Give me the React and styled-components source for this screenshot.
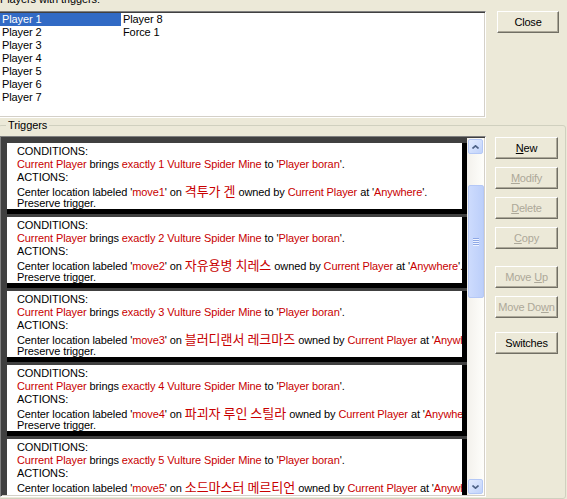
import React from "react";
import styled, { createGlobalStyle } from "styled-components";

const GlobalStyle = createGlobalStyle`
  html, body {
    margin: 0;
    padding: 0;
    height: 499px;
    overflow: hidden;
    background: #ece9d8;
  }
  body {
    font-family: "Liberation Sans", Arial, sans-serif;
    font-size: 11px;
    letter-spacing: -0.1px;
    color: #000;
  }
`;

const Page = styled.div`
  display: flex;
  flex-direction: column;
  width: 567px;
  height: 499px;
  overflow: hidden;
`;

const TopRow = styled.div`
  display: flex;
  margin-left: -2px;
  gap: 11px;
`;

const TopLeft = styled.div`
  display: flex;
  flex-direction: column;
  width: 488px;
`;

const Caption = styled.div`
  line-height: 13px;
  height: 13px;
  margin-top: -7px;
  padding-left: 2px;
`;

const PlayerList = styled.div`
  box-sizing: border-box;
  margin-top: 5px;
  height: 107px;
  padding: 1px;
  background: #fff;
  border: 1px solid;
  border-color: #808080 #fff #fff #808080;
  box-shadow: inset 1px 1px 0 #404040, inset -1px -1px 0 #d4d0c8;
  display: grid;
  grid-auto-flow: column;
  grid-template-rows: repeat(7, 13px);
  grid-template-columns: 121px;
  grid-auto-columns: 121px;
`;

const PlayerItem = styled.div`
  line-height: 13px;
  padding-left: 2px;
  white-space: nowrap;
  background: ${(p) => (p.$selected ? "#316ac5" : "transparent")};
  color: ${(p) => (p.$selected ? "#fff" : "#000")};
`;

const Button = styled.button`
  box-sizing: border-box;
  width: ${(p) => p.$width || 63}px;
  height: 22px;
  margin: ${(p) => p.$top || 0}px 0 0 0;
  padding: 0;
  font-family: "Liberation Sans", Arial, sans-serif;
  font-size: 11px;
  letter-spacing: -0.2px;
  white-space: nowrap;
  color: ${(p) => (p.disabled ? "#aca899" : "#000")};
  background: #ece9d8;
  border: 1px solid;
  border-color: #fff #716f64 #716f64 #fff;
  box-shadow: inset -1px -1px 0 #aca899;
  cursor: default;
  u {
    text-decoration: underline;
  }
`;

const GroupBox = styled.fieldset`
  box-sizing: border-box;
  width: 568px;
  margin: 1px 0 0 -2px;
  padding: 4px 0 0 1px;
  min-width: 0;
  border: 1px solid #d0d0bf;
  border-radius: 3px;
  height: 420px;
`;

const Legend = styled.legend`
  margin-left: 6px;
  padding: 0 2px;
  line-height: 13px;
  font-size: 11px;
`;

const GroupRow = styled.div`
  display: flex;
  gap: 9px;
`;

const TriggerList = styled.div`
  box-sizing: border-box;
  width: 486px;
  height: 361px;
  padding: 1px;
  border: 1px solid;
  border-color: #808080 #fff #fff #808080;
  box-shadow: inset 1px 1px 0 #404040, inset -1px -1px 0 #d4d0c8;
  display: flex;
  background: #404040;
`;

const Entries = styled.div`
  flex: 1;
  overflow: hidden;
  padding: 5px 0 0 5px;
`;

const Entry = styled.div`
  box-sizing: border-box;
  height: 71px;
  margin-bottom: 3px;
  padding: 2px 0 0 10px;
  background: #fff;
  border-right: 5px solid #000;
  border-bottom: 5px solid #000;
  overflow: hidden;
  white-space: nowrap;
`;

const Line = styled.div`
  height: 13px;
  line-height: 13px;
`;

const Red = styled.span`
  color: #c80000;
`;

const Hangul = styled.span`
  color: #c80000;
  font-family: "Noto Sans CJK KR", sans-serif;
  font-size: 13px;
  letter-spacing: 0;
  line-height: 13px;
`;

const ScrollBar = styled.div`
  width: 17px;
  display: flex;
  flex-direction: column;
  background: linear-gradient(to right, #f3f1ec, #fefefb);
`;

const ScrollButton = styled.div`
  box-sizing: border-box;
  height: 15px;
  margin: ${(p) => (p.$down ? "auto 1px 1px 1px" : "1px 1px 0 1px")};
  border: 1px solid #b4c8f6;
  border-radius: 2px;
  background: linear-gradient(135deg, #e4ecfe, #c1d3fb);
  display: flex;
  align-items: center;
  justify-content: center;
`;

const Thumb = styled.div`
  box-sizing: border-box;
  height: 113px;
  margin: 31px 0 0 1px;
  border: 1px solid #b5c8f6;
  border-radius: 2px;
  background: linear-gradient(to right, #cddbfd, #bccffa);
  display: flex;
  flex-direction: column;
  align-items: center;
  justify-content: center;
  gap: 1px;
`;

const Grip = styled.div`
  width: 6px;
  height: 1px;
  background: #8ea8e6;
  box-shadow: 0 1px 0 #eef3ff;
`;

const ButtonColumn = styled.div`
  display: flex;
  flex-direction: column;
`;

const Chevron = ({ down }) => (
  <svg width="7" height="4" viewBox="0 0 7 4">
    <path
      d={down ? "M0.5 0.5 L3.5 3.2 L6.5 0.5" : "M0.5 3.5 L3.5 0.8 L6.5 3.5"}
      fill="none"
      stroke="#4d6185"
      strokeWidth="1.6"
    />
  </svg>
);

const players = [
  "Player 1",
  "Player 2",
  "Player 3",
  "Player 4",
  "Player 5",
  "Player 6",
  "Player 7",
  "Player 8",
  "Force 1",
];

const triggers = [
  { n: 1, unit: "격투가 겐" },
  { n: 2, unit: "자유용병 치레스" },
  { n: 3, unit: "블러디랜서 레크마즈" },
  { n: 4, unit: "파괴자 루인 스틸라" },
  { n: 5, unit: "소드마스터 메르티언" },
];

const TriggerEntry = ({ n, unit }) => (
  <Entry>
    <Line>CONDITIONS:</Line>
    <Line>
      <Red>Current Player</Red> brings <Red>exactly {n} Vulture Spider Mine</Red> to '
      <Red>Player boran</Red>'.
    </Line>
    <Line>ACTIONS:</Line>
    <Line>
      Center location labeled '<Red>move{n}</Red>' on <Hangul>{unit}</Hangul> owned by{" "}
      <Red>Current Player</Red> at '<Red>Anywhere</Red>'.
    </Line>
    <Line>Preserve trigger.</Line>
  </Entry>
);

const App = () => {
  return (
    <Page>
      <GlobalStyle />
      <TopRow>
        <TopLeft>
          <Caption>Players with triggers:</Caption>
          <PlayerList>
            {players.map((p, i) => (
              <PlayerItem key={p} $selected={i === 0}>
                {p}
              </PlayerItem>
            ))}
          </PlayerList>
        </TopLeft>
        <Button $top={11} $width={62}>
          Close
        </Button>
      </TopRow>

      <GroupBox>
        <Legend>Triggers</Legend>
        <GroupRow>
          <TriggerList>
            <Entries>
              {triggers.map((t) => (
                <TriggerEntry key={t.n} n={t.n} unit={t.unit} />
              ))}
            </Entries>
            <ScrollBar>
              <ScrollButton>
                <Chevron />
              </ScrollButton>
              <Thumb>
                <Grip />
                <Grip />
                <Grip />
                <Grip />
              </Thumb>
              <ScrollButton $down>
                <Chevron down />
              </ScrollButton>
            </ScrollBar>
          </TriggerList>
          <ButtonColumn>
            <Button $top={1}>
              <u>N</u>ew
            </Button>
            <Button $top={8} disabled>
              <u>M</u>odify
            </Button>
            <Button $top={8} disabled>
              <u>D</u>elete
            </Button>
            <Button $top={8} disabled>
              <u>C</u>opy
            </Button>
            <Button $top={17} disabled>
              Move <u>U</u>p
            </Button>
            <Button $top={8} disabled>
              Move Do<u>w</u>n
            </Button>
            <Button $top={14}>Switches</Button>
          </ButtonColumn>
        </GroupRow>
      </GroupBox>
    </Page>
  );
};

export default App;
